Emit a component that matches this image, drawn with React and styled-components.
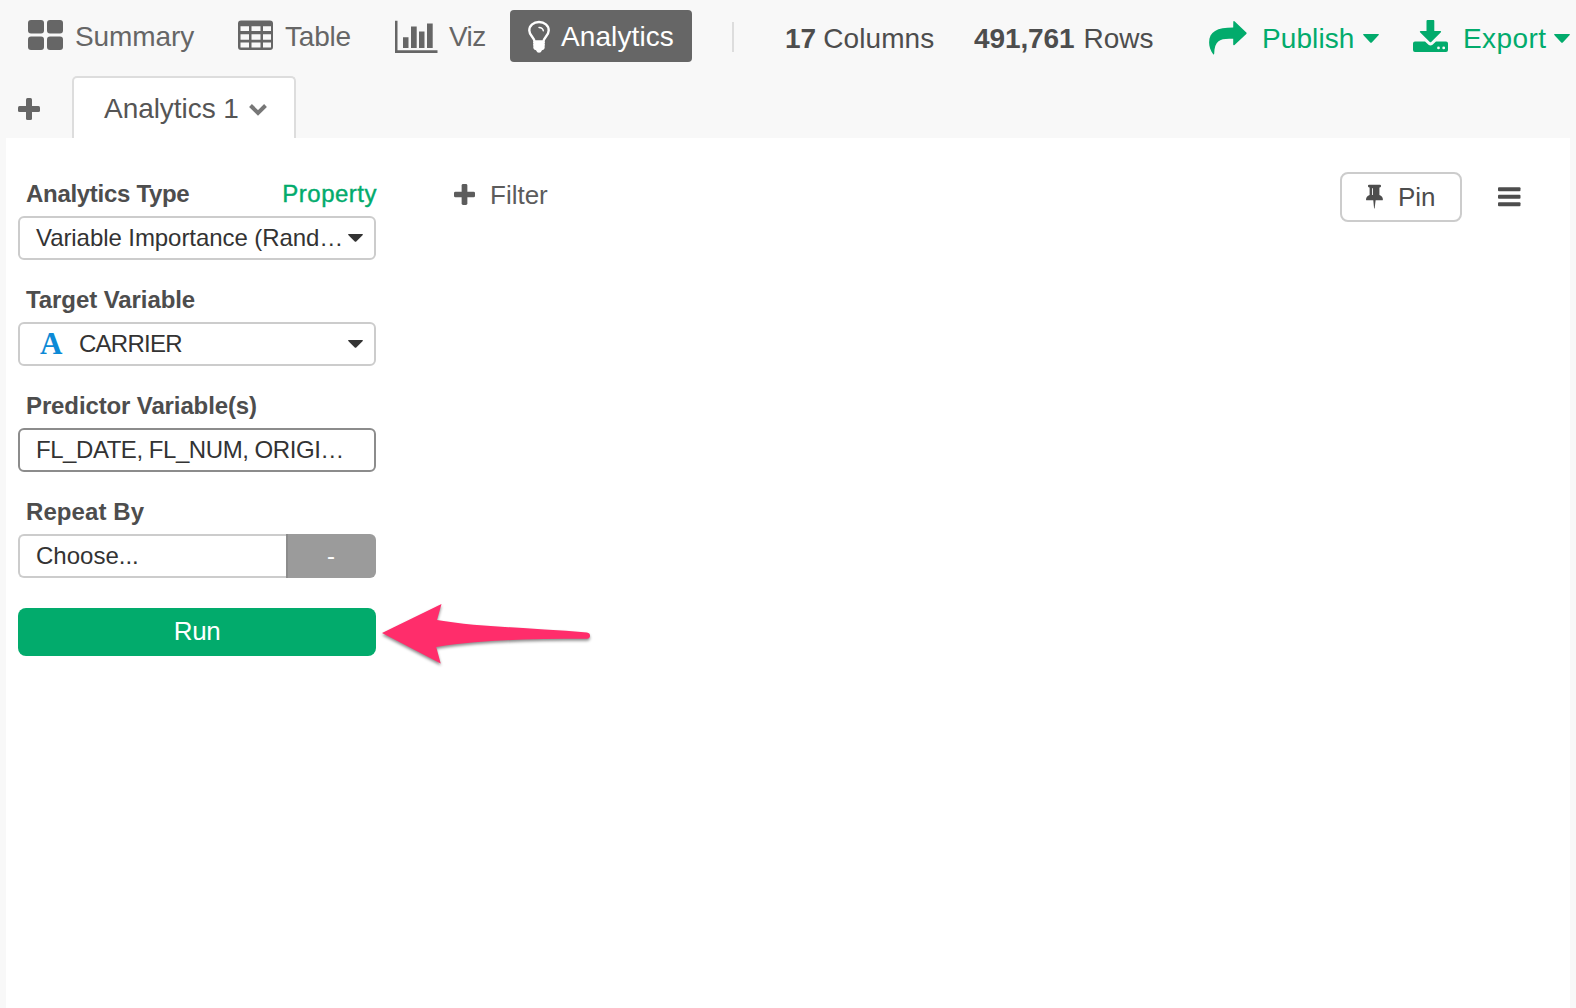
import React from 'react';
import styled, { createGlobalStyle } from 'styled-components';

const GREEN = '#02ab6c';

const GlobalStyle = createGlobalStyle`
  * { box-sizing: border-box; }
  body {
    margin: 0;
    background: #f8f8f8;
    font-family: "Liberation Sans", Arial, sans-serif;
    -webkit-font-smoothing: antialiased;
  }
  svg { display: block; flex: none; }
  button { font: inherit; margin: 0; padding: 0; border: 0; background: none; }
`;

const Page = styled.div`
  width: 1576px;
  height: 1008px;
  overflow: hidden;
  display: flex;
  flex-direction: column;
`;

const Toolbar = styled.header`
  height: 62px;
  padding: 10px 0 0 18px;
  display: flex;
  align-items: flex-start;
`;

const Label = styled.span`
  white-space: nowrap;
  letter-spacing: ${(p) => p.$track || 0}px;
`;

const NavButton = styled.button`
  flex: none;
  width: ${(p) => p.$width}px;
  height: 52px;
  padding-left: ${(p) => p.$pad}px;
  display: flex;
  align-items: center;
  gap: ${(p) => p.$gap}px;
  border-radius: 4px;
  font-size: 28px;
  line-height: 50px;
  color: ${(p) => (p.$active ? '#fff' : '#666')};
  background: ${(p) => (p.$active ? '#666' : 'transparent')};
  ${Label} {
    padding-top: 2px;
  }
`;

const Divider = styled.div`
  width: 2px;
  height: 30px;
  margin: 12px 51px 0 40px;
  background: #ddd;
`;

const Stat = styled.div`
  flex: none;
  width: ${(p) => p.$width}px;
  display: flex;
  gap: ${(p) => p.$gap}px;
  padding-top: 3px;
  font-size: 28px;
  line-height: 52px;
  color: #4d4d4d;
`;

const Action = styled.button`
  flex: none;
  width: ${(p) => p.$width}px;
  height: 52px;
  margin-top: 3px;
  display: flex;
  align-items: center;
  font-size: 28px;
  line-height: 52px;
  color: ${GREEN};
`;

const ActionText = styled(Label)`
  width: ${(p) => p.$width}px;
  margin-left: ${(p) => p.$left}px;
  text-align: left;
`;

const TabBar = styled.nav`
  height: 76px;
  padding-left: 18px;
  display: flex;
  align-items: flex-end;
`;

const AddTab = styled.button`
  width: 54px;
  height: 62px;
  padding-top: 4px;
  display: flex;
  align-items: center;
`;

const Tab = styled.button`
  width: 224px;
  height: 62px;
  padding-left: 30px;
  display: flex;
  align-items: center;
  border: 2px solid #ddd;
  border-bottom: 0;
  border-radius: 5px 5px 0 0;
  background: #fff;
  font-size: 28px;
  color: #555;
`;

const TabText = styled(Label)`
  width: 145px;
  padding-top: 2px;
  line-height: 58px;
  text-align: left;
`;

const Content = styled.main`
  flex: 1;
  margin: 0 6px;
  padding: 34px 49px 0 12px;
  display: flex;
  align-items: flex-start;
  background: #fff;
`;

const Sidebar = styled.aside`
  width: 358px;
  margin-right: 78px;
`;

const Field = styled.section`
  height: 106px;
`;

const FieldHead = styled.div`
  height: 44px;
  padding: 0 0 0 8px;
  display: flex;
  justify-content: space-between;
  font-size: 24px;
  line-height: 44px;
  color: #4d4d4d;
`;

const FieldTitle = styled(Label)`
  font-weight: bold;
`;

const PropertyLink = styled(Label)`
  color: ${GREEN};
  margin-right: -1px;
  -webkit-text-stroke: 0.4px ${GREEN};
`;

const Control = styled.div`
  height: 44px;
  padding: 0 11px 0 16px;
  display: flex;
  align-items: center;
  border: 2px solid ${(p) => (p.$focus ? '#8c8c8c' : '#ccc')};
  border-radius: 6px;
  background: #fff;
  color: #333;
  font-size: 24px;
  line-height: 40px;
`;

const Value = styled(Label)`
  flex: 1;
  min-width: 0;
`;

const TypeMark = styled.span`
  width: 43px;
  padding-left: 4px;
  font-family: "Liberation Serif", "Times New Roman", serif;
  font-weight: bold;
  font-size: 31px;
  color: #0d8ad6;
`;

const SplitControl = styled.div`
  display: flex;
  ${Control} {
    width: 268px;
    border-right: 0;
    border-radius: 6px 0 0 6px;
  }
`;

const Minus = styled.button`
  width: 90px;
  height: 44px;
  padding-right: 2px;
  border-left: 2px solid #8c8c8c;
  border-radius: 0 6px 6px 0;
  background: #9b9b9b;
  color: #fff;
  font-size: 24px;
  line-height: 44px;
`;

const RunRow = styled.div`
  position: relative;
  margin-top: 12px;
`;

const RunButton = styled.button`
  display: block;
  width: 358px;
  height: 48px;
  padding-bottom: 2px;
  border-radius: 8px;
  background: ${GREEN};
  color: #fff;
  font-size: 26px;
  line-height: 46px;
`;

const Pointer = styled.svg`
  position: absolute;
  left: 358px;
  top: -10px;
  overflow: visible;
  filter: drop-shadow(0 2px 1.5px rgba(0, 0, 0, 0.45));
`;

const FilterButton = styled.button`
  height: 46px;
  display: flex;
  align-items: center;
  gap: 15px;
  font-size: 26px;
  line-height: 46px;
  color: #5c5c5c;
  svg {
    margin-bottom: 2px;
  }
`;

const Tools = styled.div`
  margin-left: auto;
  display: flex;
  align-items: center;
  gap: 36px;
`;

const PinButton = styled.button`
  width: 122px;
  height: 50px;
  padding-left: 24px;
  display: flex;
  align-items: center;
  gap: 15px;
  border: 2px solid #ccc;
  border-radius: 8px;
  font-size: 26px;
  color: #4d4d4d;
`;

const CaretShape = styled.svg`
  margin-bottom: ${(p) => p.$lift || 0}px;
`;

const Caret = ({ w = 16, h = 9, color = GREEN, lift = 2 }) => (
  <CaretShape $lift={lift} width={w} height={h} viewBox="0 0 16 9" preserveAspectRatio="none">
    <path d="M.7 0H15.3Q16.2.2 15.7 1L8.8 8.4Q8 9.2 7.2 8.4L.3 1Q-.2.2.7 0Z" fill={color} />
  </CaretShape>
);

const Plus = ({ size, color }) => (
  <svg width={size} height={size} viewBox="0 0 22 22" fill={color}>
    <rect x="8" y="0" width="6" height="22" rx="1.5" />
    <rect x="0" y="8" width="22" height="6" rx="1.5" />
  </svg>
);

const TilesIcon = () => (
  <svg width="35" height="32" viewBox="0 0 35 32" fill="#666">
    <rect width="16" height="13.5" rx="3" />
    <rect x="19" width="16" height="13.5" rx="3" />
    <rect y="16.5" width="16" height="13.5" rx="3" />
    <rect x="19" y="16.5" width="16" height="13.5" rx="3" />
  </svg>
);

const TableIcon = () => (
  <svg width="35" height="32" viewBox="0 0 35 32">
    <path
      fill="#666"
      fillRule="evenodd"
      d="M3 .5H32Q35 .5 35 3.500V27Q35 30 32 30H3Q0 30 0 27V3.500Q0 .5 3 .5ZM2.500 6.300V11H11V6.300ZM13.500 6.300V11H22.500V6.300ZM25 6.300V11H33V6.300ZM2.500 14.300V19.700H11V14.300ZM13.500 14.300V19.700H22.500V14.300ZM25 14.300V19.700H33V14.300ZM2.500 22.500V27.500H11V22.500ZM13.500 22.500V27.500H22.500V22.500ZM25 22.500V27.500H33V22.500Z"
    />
  </svg>
);

const BarsIcon = () => (
  <svg width="43" height="33" viewBox="0 0 43 33" fill="#666">
    <path d="M0 .8H2.500V30.300H42.500V33H0ZM8 17.300H13.500V28H8ZM16 6.500H21.700V28H16ZM24 11.500H29.500V28H24ZM32 3.500H37.700V28H32Z" />
  </svg>
);

const BulbIcon = () => (
  <svg width="22" height="33" viewBox="0 0 22 33" fill="none">
    <path
      d="M6.600 21.500C6.200 17.500 1.300 15.400 1.300 10.400C1.300 5.400 5.600 2 11 2S20.700 5.400 20.700 10.400C20.700 15.400 15.800 17.500 15.400 21.500Z"
      stroke="#fff"
      strokeWidth="2.4"
    />
    <path d="M11 7.400Q15 7.600 15.300 10.800" stroke="#fff" strokeWidth="1.500" strokeLinecap="round" />
    <path
      d="M5.500 21.200H16.500Q17.400 22.500 16.600 23.600Q17.300 24.900 16.600 26Q17.400 29.500 14 30.200Q13 32.800 11 32.800T8 30.200Q4.600 29.500 5.400 26Q4.700 24.900 5.400 23.600Q4.600 22.500 5.500 21.200Z"
      fill="#fff"
    />
  </svg>
);

const ShareIcon = () => (
  <svg width="38" height="36" viewBox="0 0 38 36" fill={GREEN}>
    <path d="M24.300 .5Q24.600-.3 25.500 .3L37.300 11.500Q38 12.200 37.300 12.900L25.500 24Q24.300 24.700 24.200 23.500V17.800C12 17.200 5.600 18.500 5.200 32.500Q5.100 34.200 4.200 33.300C1.500 29.500 .1 25.500 .1 21.500C.1 10.500 8 6.500 24.200 6.500Z" />
  </svg>
);

const DownloadIcon = () => (
  <svg width="35" height="38" viewBox="0 0 35 38" fill={GREEN}>
    <path d="M14.500 0H20.500Q21.300 0 21.300 1V11H27.500Q28.600 11.300 27.900 12.200L18.200 22Q17.500 22.600 16.800 22L7 12.200Q6.400 11.300 7.500 11H13.500V1Q13.500 0 14.500 0Z" />
    <path
      fillRule="evenodd"
      d="M2 21.500H12L15.500 24.800Q17.500 26.300 19.500 24.800L23 21.500H33Q35 21.500 35 23.500V30Q35 32 33 32H2Q0 32 0 30V23.500Q0 21.500 2 21.500ZM25.500 26.500A1.400 1.400 0 1 0 25.500 29.300A1.400 1.400 0 1 0 25.500 26.500ZM30.700 26.500A1.400 1.400 0 1 0 30.700 29.300A1.400 1.400 0 1 0 30.700 26.500Z"
    />
  </svg>
);

const ChevronIcon = () => (
  <svg width="18" height="9" viewBox="0 0 18 9" fill="none" overflow="visible">
    <path d="M1.500 1.500L9 8.900L16.500 1.500" stroke="#777" strokeWidth="4" />
  </svg>
);

const PinIcon = () => (
  <svg width="17" height="27" viewBox="0 0 17.500 27" fill="#4d4d4d">
    <path
      fillRule="evenodd"
      d="M3.300 .3H14.300Q15.500 .3 15.500 1.700T14.200 3.200H13.800V10.800Q17.300 12.300 17.400 15.500Q17.400 16.400 16.500 16.400H9.900L8.900 24.500Q8.600 25.300 8.300 24.500L7.500 16.400H.9Q0 16.400 0 15.500Q.2 12.300 3.700 10.800V3.200H3.300Q2 3.200 2 1.700T3.300 .3ZM6.300 4V10.800H7.200V4Z"
    />
  </svg>
);

const MenuIcon = () => (
  <svg width="23" height="20" viewBox="0 0 23 20" fill="#4d4d4d">
    <rect y=".2" width="22.500" height="4" rx="1" />
    <rect y="7.700" width="22.500" height="4" rx="1" />
    <rect y="15.200" width="22.500" height="4" rx="1" />
  </svg>
);

export default function App() {
  return (
    <Page>
      <GlobalStyle />
      <Toolbar>
        <NavButton $width={210} $pad={10} $gap={12}>
          <TilesIcon />
          <Label $track={-0.08}>Summary</Label>
        </NavButton>
        <NavButton $width={157} $pad={10} $gap={12}>
          <TableIcon />
          <Label $track={-0.2}>Table</Label>
        </NavButton>
        <NavButton $width={125} $pad={10} $gap={11}>
          <BarsIcon />
          <Label $track={-0.6}>Viz</Label>
        </NavButton>
        <NavButton $width={182} $pad={18} $gap={11} $active>
          <BulbIcon />
          <Label $track={0.1}>Analytics</Label>
        </NavButton>
        <Divider />
        <Stat $width={189} $gap={7}>
          <b>17</b>
          <Label $track={0.1}>Columns</Label>
        </Stat>
        <Stat $width={235} $gap={9}>
          <FieldTitle $track={-0.1}>491,761</FieldTitle>
          <Label>Rows</Label>
        </Stat>
        <Action $width={204}>
          <ShareIcon />
          <ActionText $left={15} $width={101} $track={0.1}>Publish</ActionText>
          <Caret />
        </Action>
        <Action $width={160}>
          <DownloadIcon />
          <ActionText $left={15} $width={91} $track={0.4}>Export</ActionText>
          <Caret />
        </Action>
      </Toolbar>
      <TabBar>
        <AddTab aria-label="Add">
          <Plus size={22} color="#666" />
        </AddTab>
        <Tab>
          <TabText $track={-0.05}>Analytics 1</TabText>
          <ChevronIcon />
        </Tab>
      </TabBar>
      <Content>
        <Sidebar>
          <Field>
            <FieldHead>
              <FieldTitle $track={-0.3}>Analytics Type</FieldTitle>
              <PropertyLink $track={0.5}>Property</PropertyLink>
            </FieldHead>
            <Control>
              <Value $track={-0.07}>Variable Importance (Rand…</Value>
              <Caret w={15} h={8} color="#333" lift={0} />
            </Control>
          </Field>
          <Field>
            <FieldHead>
              <FieldTitle $track={-0.08}>Target Variable</FieldTitle>
            </FieldHead>
            <Control>
              <TypeMark>A</TypeMark>
              <Value $track={-0.75}>CARRIER</Value>
              <Caret w={15} h={8} color="#333" lift={0} />
            </Control>
          </Field>
          <Field>
            <FieldHead>
              <FieldTitle $track={-0.12}>Predictor Variable(s)</FieldTitle>
            </FieldHead>
            <Control $focus>
              <Value $track={-0.45}>FL_DATE, FL_NUM, ORIGI…</Value>
            </Control>
          </Field>
          <Field>
            <FieldHead>
              <FieldTitle $track={0.08}>Repeat By</FieldTitle>
            </FieldHead>
            <SplitControl>
              <Control>
                <Value>Choose...</Value>
              </Control>
              <Minus>-</Minus>
            </SplitControl>
          </Field>
          <RunRow>
            <RunButton>
              <Label $track={-0.4}>Run</Label>
            </RunButton>
            <Pointer width="240" height="80" viewBox="0 0 240 80">
              <path
                d="M6 35L65.500 6L61 22C100 29 160 30 211 34.600Q214 35.200 214 37.700T211 40.700C160 40.800 105 41.500 60.200 49L64.700 65.500Z"
                fill="#ff2d6b"
              />
            </Pointer>
          </RunRow>
        </Sidebar>
        <FilterButton>
          <Plus size={21} color="#5c5c5c" />
          <Label>Filter</Label>
        </FilterButton>
        <Tools>
          <PinButton>
            <PinIcon />
            <Label>Pin</Label>
          </PinButton>
          <MenuIcon />
        </Tools>
      </Content>
    </Page>
  );
}
